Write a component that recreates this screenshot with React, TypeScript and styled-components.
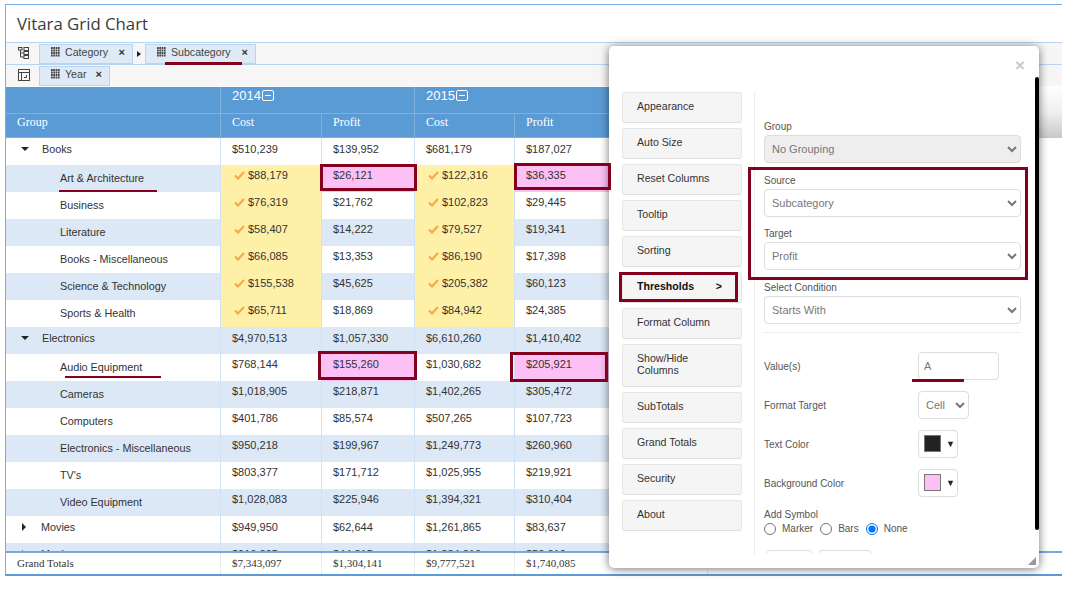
import styled, { createGlobalStyle } from 'styled-components';

const GlobalStyle = createGlobalStyle`
  html, body { margin: 0; padding: 0; background: #fff; }
  body { font-family: "Liberation Sans", Arial, sans-serif; color: #333; overflow: hidden; }
  * { box-sizing: border-box; }
`;

const MAROON = '#85001f';
const COLUMNS = '214px 101px 93px 100px 193px';

interface Frame {
  left: number;
  top: number;
  width: number;
  height: number;
}

interface RowData {
  name: string;
  level: 0 | 1;
  open?: boolean;
  values: string[];
  marked?: boolean;
  frames?: Frame[];
  underline?: { left: number; width: number; bottom: number };
}

const rows: RowData[] = [
  { name: 'Books', level: 0, open: true, values: ['$510,239', '$139,952', '$681,179', '$187,027'] },
  {
    name: 'Art & Architecture',
    level: 1,
    marked: true,
    underline: { left: 53, width: 98, bottom: 0 },
    frames: [
      { left: -2, top: -1, width: 97, height: 27 },
      { left: -1, top: -2, width: 97, height: 27 },
    ],
    values: ['$88,179', '$26,121', '$122,316', '$36,335'],
  },
  { name: 'Business', level: 1, marked: true, values: ['$76,319', '$21,762', '$102,823', '$29,445'] },
  { name: 'Literature', level: 1, marked: true, values: ['$58,407', '$14,222', '$79,527', '$19,341'] },
  { name: 'Books - Miscellaneous', level: 1, marked: true, values: ['$66,085', '$13,353', '$86,190', '$17,398'] },
  { name: 'Science & Technology', level: 1, marked: true, values: ['$155,538', '$45,625', '$205,382', '$60,123'] },
  { name: 'Sports & Health', level: 1, marked: true, values: ['$65,711', '$18,869', '$84,942', '$24,385'] },
  { name: 'Electronics', level: 0, open: true, values: ['$4,970,513', '$1,057,330', '$6,610,260', '$1,410,402'] },
  {
    name: 'Audio Equipment',
    level: 1,
    underline: { left: 59, width: 96, bottom: 3 },
    frames: [
      { left: -4, top: -3, width: 99, height: 29 },
      { left: -5, top: -2, width: 98, height: 30 },
    ],
    values: ['$768,144', '$155,260', '$1,030,682', '$205,921'],
  },
  { name: 'Cameras', level: 1, values: ['$1,018,905', '$218,871', '$1,402,265', '$305,472'] },
  { name: 'Computers', level: 1, values: ['$401,786', '$85,574', '$507,265', '$107,723'] },
  { name: 'Electronics - Miscellaneous', level: 1, values: ['$950,218', '$199,967', '$1,249,773', '$260,960'] },
  { name: "TV's", level: 1, values: ['$803,377', '$171,712', '$1,025,955', '$219,921'] },
  { name: 'Video Equipment', level: 1, values: ['$1,028,083', '$225,946', '$1,394,321', '$310,404'] },
  { name: 'Movies', level: 0, values: ['$949,950', '$62,644', '$1,261,865', '$83,637'] },
  { name: 'Music', level: 0, values: ['$916,895', '$44,815', '$1,284,316', '$58,810'] },
];

const menu = ['Appearance', 'Auto Size', 'Reset Columns', 'Tooltip', 'Sorting', 'Thresholds', 'Format Column', 'Show/Hide Columns', 'SubTotals', 'Grand Totals', 'Security', 'About'];

function GridDots() {
  return (
    <svg width="9" height="10" viewBox="0 0 9 10" fill="#444">
      {[0, 2.3, 4.6, 6.9].flatMap((x) =>
        [0, 2.5, 5, 7.5].map((y) => <rect key={`${x}-${y}`} x={x} y={y} width="1.7" height="2" />),
      )}
    </svg>
  );
}

function Check() {
  return (
    <svg width="11" height="9" viewBox="0 0 11 9" fill="none" stroke="#f6a94a" strokeWidth="2.2">
      <path d="M1 4.5 L4 7.5 L10 1" />
    </svg>
  );
}

function TreeIcon() {
  return (
    <svg width="11" height="12" viewBox="0 0 11 12" fill="none" stroke="#444" strokeWidth="1">
      <rect x="0.5" y="0.5" width="3.5" height="2.5" />
      <rect x="6" y="0.5" width="4.5" height="3" />
      <rect x="6" y="4.5" width="4.5" height="3" />
      <rect x="6" y="8.5" width="4.5" height="3" />
      <path d="M2.5 3 V10 H6 M2.5 6 H6" />
    </svg>
  );
}

function PivotIcon() {
  return (
    <svg width="12" height="12" viewBox="0 0 12 12" fill="none" stroke="#444" strokeWidth="1">
      <rect x="0.5" y="0.5" width="11" height="11" />
      <path d="M0.5 3.5 H11.5 M3.5 3.5 V11.5 M6 8.5 H8.5 V6" />
    </svg>
  );
}

const Chart = styled.div`
  display: flex;
  flex-direction: column;
  width: 1057px;
  height: 572px;
  margin: 4px 0 0 5px;
  border: 1px solid #74aee3;
  border-right: none;
  border-bottom: 2px solid #5b9bd5;
`;

const Title = styled.div`
  height: 37px;
  padding: 8px 0 0 11px;
  font-family: "Open Sans", sans-serif;
  font-size: 16.8px;
  line-height: 22px;
  color: #3a3a3a;
`;

const Toolbar = styled.div`
  display: flex;
  align-items: center;
  gap: 4px;
  height: 22px;
  border-top: 1px solid #b7d5f0;
  background: #f6f6f6;
`;

const ToolIcon = styled.div`
  display: flex;
  align-items: center;
  justify-content: center;
  width: 29px;
  height: 100%;
  margin-top: -2px;
  padding-left: 6px;
`;

const Chip = styled.div<{ $width: number }>`
  position: relative;
  display: flex;
  align-items: center;
  width: ${(p) => p.$width}px;
  height: 20px;
  padding: 0 7px 3px 11px;
  border: 1px solid #b7d5f0;
  background: #deeaf6;
  font-size: 10.6px;
  color: #444;
`;

const ChipLabel = styled.span`
  flex: 1;
  margin-left: 5px;
`;

const ChipClose = styled.span`
  font-size: 11px;
  font-weight: bold;
  color: #333;
`;

const Chevron = styled.span`
  width: 0;
  height: 0;
  border-left: 4px solid #222;
  border-top: 3px solid transparent;
  border-bottom: 3px solid transparent;
`;

const Mark = styled.span<{ $left: number; $width: number; $bottom: number }>`
  position: absolute;
  left: ${(p) => p.$left}px;
  bottom: ${(p) => p.$bottom}px;
  width: ${(p) => p.$width}px;
  height: 2.5px;
  background: ${MAROON};
  z-index: 2;
`;

const HeaderTop = styled.div`
  display: flex;
  height: 26px;
  margin-top: 1px;
  background: #5b9bd5;
  color: #fff;
`;

const HeaderSub = styled(HeaderTop)`
  height: 25px;
  margin-top: 0;
  border-top: 1px solid #7fb1e0;
  border-bottom: 1px solid #7fb1e0;
  font-family: "Liberation Serif", serif;
  font-size: 12px;
`;

const HeaderFill = styled.div<{ $from: string; $to: string }>`
  flex: 1;
  margin: -1px 0;
  background: linear-gradient(${(p) => p.$from}, ${(p) => p.$to});
`;

const HeadCell = styled.div<{ $width: number }>`
  display: flex;
  align-items: center;
  gap: 1px;
  width: ${(p) => p.$width}px;
  height: 100%;
  padding: 0 0 6px 11px;
  border-left: 1px solid #7fb1e0;
  &:first-child {
    border-left: none;
  }
`;

const YearCell = styled(HeadCell)`
  font-size: 13px;
  padding-bottom: 9px;
`;

const Collapse = styled.span`
  display: inline-block;
  position: relative;
  width: 12px;
  height: 11px;
  border: 1px solid #fff;
  border-radius: 2px;
  &::after {
    content: '';
    position: absolute;
    left: 2px;
    right: 2px;
    top: 4px;
    height: 1px;
    background: #fff;
  }
`;

const Body = styled.div`
  flex: 1;
  overflow: hidden;
`;

const Row = styled.div<{ $alt: boolean }>`
  display: grid;
  grid-template-columns: ${COLUMNS};
  height: 27px;
  width: 701px;
  background: ${(p) => (p.$alt ? '#dce8f5' : '#fff')};
`;

const GroupCell = styled.div<{ $level: number }>`
  position: relative;
  display: flex;
  align-items: center;
  height: 100%;
  padding: ${(p) => (p.$level ? '0 0 2px 54px' : '0 0 5px 15px')};
  font-size: 10.8px;
  color: #333;
`;

const Caret = styled.span<{ $open?: boolean }>`
  width: 0;
  height: 0;
  margin-right: ${(p) => (p.$open ? '13px' : '15px')};
  ${(p) =>
    p.$open
      ? `border-top: 4px solid #222; border-left: 4px solid transparent; border-right: 4px solid transparent;`
      : `border-left: 4px solid #222; border-top: 4px solid transparent; border-bottom: 4px solid transparent; margin-left: 1px;`}
`;

const Cell = styled.div<{ $tone?: 'yellow' | 'pink'; $level: number }>`
  position: relative;
  display: flex;
  align-items: center;
  gap: 3px;
  padding: 0 0 ${(p) => (p.$level ? '7px' : '5px')} ${(p) => (p.$tone === 'yellow' ? '13px' : '11px')};
  border-left: 1px solid #cfe2f5;
  font-size: 11px;
  color: #333;
  background: ${(p) => (p.$tone === 'yellow' ? '#fff0a8' : p.$tone === 'pink' ? '#fcc0f5' : 'transparent')};
`;

// sits above the modal: the annotation box of the last column overlaps its edge
const CellBox = styled.span<Frame>`
  position: absolute;
  left: ${(p) => p.left}px;
  top: ${(p) => p.top}px;
  width: ${(p) => p.width}px;
  height: ${(p) => p.height}px;
  border: 3px solid ${MAROON};
  z-index: 6;
`;

const Footer = styled.div`
  display: grid;
  grid-template-columns: ${COLUMNS} 94px;
  height: 23px;
  border-top: 2px solid #7ba7d7;
  font-family: "Liberation Serif", serif;
  font-size: 11px;
  color: #333;
`;

const FootCell = styled.div`
  display: flex;
  align-items: center;
  padding: 0 0 2px 11px;
  border-left: 1px dotted #c3d9ef;
  &:first-child {
    border-left: none;
  }
`;

const Modal = styled.div`
  position: absolute;
  left: 609px;
  top: 46px;
  width: 430px;
  height: 522px;
  padding: 46px 0 13px 13px;
  display: flex;
  background: #fff;
  border-radius: 5px;
  box-shadow: 0 1px 10px rgba(0, 0, 0, 0.55);
  overflow: hidden;
  z-index: 5;
`;

const CloseX = styled.span`
  position: absolute;
  right: 14px;
  top: 11px;
  font-size: 17px;
  font-weight: bold;
  line-height: 18px;
  color: #c9c9c9;
`;

const ScrollBar = styled.div`
  position: absolute;
  right: 0;
  top: 31px;
  width: 4px;
  height: 453px;
  background: #000;
  border-radius: 2px;
`;

const ResizeGrip = styled.svg`
  position: absolute;
  right: 3px;
  bottom: 3px;
`;

const Menu = styled.div`
  display: flex;
  flex-direction: column;
  gap: 5px;
  width: 120px;
`;

const MenuButton = styled.div<{ $active?: boolean; $tall?: boolean }>`
  position: relative;
  display: flex;
  align-items: center;
  justify-content: space-between;
  height: ${(p) => (p.$tall ? '43px' : '31px')};
  padding: 0 19px 4px 14px;
  border: 1px solid #e6e6e6;
  border-bottom-color: #ddd;
  border-radius: 3px;
  background: #f5f5f5;
  font-size: 10.6px;
  line-height: 12px;
  font-weight: ${(p) => (p.$active ? 'bold' : 'normal')};
  color: ${(p) => (p.$active ? '#111' : '#333')};
`;

const MenuBox = styled.span`
  position: absolute;
  left: -4px;
  right: 3px;
  top: -1px;
  bottom: 0;
  border: 3px solid ${MAROON};
`;

const Panel = styled.div`
  position: relative;
  width: 278px;
  height: 463px;
  margin-left: 12px;
  padding: 27px 0 0 9px;
  border-left: 1px solid #ececec;
`;

const Label = styled.div`
  height: 16px;
  padding-top: 1px;
  font-size: 10px;
  line-height: 14px;
  color: #555;
`;

const Select = styled.select<{ $width?: number }>`
  display: block;
  width: ${(p) => p.$width ?? 257}px;
  height: 28px;
  padding: 0 3px;
  border: 1px solid #ddd;
  border-radius: 4px;
  background-color: ${(p) => (p.disabled ? '#eee' : '#fff')};
  font-family: "Liberation Sans", sans-serif;
  font-size: 11px;
  color: #777;
  opacity: 1;
`;

const Field = styled.div`
  height: 53.7px;
`;

const SourceBox = styled.div`
  position: absolute;
  left: -7px;
  top: 75px;
  width: 280px;
  height: 113px;
  border: 3px solid ${MAROON};
  pointer-events: none;
`;

const Divider = styled.div`
  width: 257px;
  height: 1px;
  margin: -2px 0 19px;
  background: #eee;
`;

const FormRow = styled.div`
  display: flex;
  align-items: center;
  height: 28px;
  margin-bottom: 11px;
  &:first-of-type {
    margin-bottom: 12px;
  }
`;

const RowLabel = styled.div`
  width: 154px;
  padding-top: 2px;
  font-size: 10px;
  color: #555;
`;

const ValueInput = styled.div`
  position: relative;
  display: flex;
  align-items: center;
  width: 81px;
  height: 28px;
  padding-left: 5px;
  border: 1px solid #ddd;
  border-radius: 4px;
  font-size: 11px;
  color: #777;
`;

const ColorButton = styled.div`
  display: flex;
  align-items: center;
  gap: 5px;
  width: 40px;
  height: 28px;
  padding-left: 5px;
  border: 1px solid #ddd;
  border-radius: 4px;
  font-size: 9px;
  color: #222;
`;

const Swatch = styled.span<{ $color: string }>`
  width: 17px;
  height: 17px;
  border: 1px solid #777;
  background: ${(p) => p.$color};
`;

const SymbolLabel = styled(Label)`
  margin-top: -1px;
`;

const RadioRow = styled.div`
  display: flex;
  align-items: center;
  font-size: 10px;
  color: #555;
  input {
    width: 12px;
    height: 12px;
    margin: 0 6px 0 0;
  }
  label {
    display: flex;
    align-items: center;
    margin-right: 7px;
  }
`;

const Actions = styled.div`
  display: flex;
  gap: 5px;
  height: 3px;
  margin: 15px 0 0 2px;
  overflow: hidden;
`;

const ActionButton = styled.div<{ $width: number }>`
  width: ${(p) => p.$width}px;
  height: 28px;
  border: 1px solid #ddd;
  border-radius: 4px;
`;

export default function App() {
  return (
    <>
      <GlobalStyle />
      <Chart>
        <Title>Vitara Grid Chart</Title>
        <Toolbar>
          <ToolIcon>
            <TreeIcon />
          </ToolIcon>
          <Chip $width={94}>
            <GridDots />
            <ChipLabel>Category</ChipLabel>
            <ChipClose>×</ChipClose>
          </Chip>
          <Chevron />
          <Chip $width={111}>
            <GridDots />
            <ChipLabel>Subcategory</ChipLabel>
            <ChipClose>×</ChipClose>
            <Mark $left={19} $width={77} $bottom={-2} />
          </Chip>
        </Toolbar>
        <Toolbar>
          <ToolIcon>
            <PivotIcon />
          </ToolIcon>
          <Chip $width={71}>
            <GridDots />
            <ChipLabel>Year</ChipLabel>
            <ChipClose>×</ChipClose>
          </Chip>
        </Toolbar>
        <HeaderTop>
          <YearCell $width={214} />
          <YearCell $width={194}>
            2014
            <Collapse />
          </YearCell>
          <YearCell $width={293}>
            2015
            <Collapse />
          </YearCell>
          <HeaderFill $from="#ffffff" $to="#eeeeee" />
        </HeaderTop>
        <HeaderSub>
          <HeadCell $width={214}>Group</HeadCell>
          <HeadCell $width={101}>Cost</HeadCell>
          <HeadCell $width={93}>Profit</HeadCell>
          <HeadCell $width={100}>Cost</HeadCell>
          <HeadCell $width={193}>Profit</HeadCell>
          <HeaderFill $from="#eeeeee" $to="#c8c8c8" />
        </HeaderSub>
        <Body>
          {rows.map((row, i) => (
            <Row key={row.name} $alt={i % 2 === 1}>
              <GroupCell $level={row.level}>
                {row.level === 0 && <Caret $open={row.open} />}
                {row.name}
                {row.underline && <Mark $left={row.underline.left} $width={row.underline.width} $bottom={row.underline.bottom} />}
              </GroupCell>
              {row.values.map((value, c) => {
                const isCost = c % 2 === 0;
                const yellow = row.marked && isCost;
                const frame = !isCost ? row.frames?.[(c - 1) / 2] : undefined;
                return (
                  <Cell key={c} $level={row.level} $tone={yellow ? 'yellow' : frame ? 'pink' : undefined}>
                    {yellow && <Check />}
                    {value}
                    {frame && <CellBox {...frame} />}
                  </Cell>
                );
              })}
            </Row>
          ))}
        </Body>
        <Footer>
          <FootCell>Grand Totals</FootCell>
          <FootCell>$7,343,097</FootCell>
          <FootCell>$1,304,141</FootCell>
          <FootCell>$9,777,521</FootCell>
          <FootCell>$1,740,085</FootCell>
          <FootCell />
        </Footer>
      </Chart>

      <Modal>
        <CloseX>×</CloseX>
        <ScrollBar />
        <ResizeGrip width="8" height="8" viewBox="0 0 8 8" fill="#999">
          <path d="M8 0 V8 H0 Z" />
        </ResizeGrip>
        <Menu>
          {menu.map((item) => (
            <MenuButton key={item} $active={item === 'Thresholds'} $tall={item === 'Show/Hide Columns'}>
              {item}
              {item === 'Thresholds' && (
                <>
                  <span>&gt;</span>
                  <MenuBox />
                </>
              )}
            </MenuButton>
          ))}
        </Menu>
        <Panel>
          <Field>
            <Label>Group</Label>
            <Select disabled defaultValue="none">
              <option value="none">No Grouping</option>
            </Select>
          </Field>
          <Field>
            <Label>Source</Label>
            <Select defaultValue="subcategory">
              <option value="subcategory">Subcategory</option>
            </Select>
          </Field>
          <Field>
            <Label>Target</Label>
            <Select defaultValue="profit">
              <option value="profit">Profit</option>
            </Select>
          </Field>
          <Field>
            <Label>Select Condition</Label>
            <Select defaultValue="starts">
              <option value="starts">Starts With</option>
            </Select>
          </Field>
          <SourceBox />
          <Divider />
          <FormRow>
            <RowLabel>Value(s)</RowLabel>
            <ValueInput>
              A
              <Mark $left={-7} $width={52} $bottom={-3} />
            </ValueInput>
          </FormRow>
          <FormRow>
            <RowLabel>Format Target</RowLabel>
            <Select $width={51} defaultValue="cell">
              <option value="cell">Cell</option>
            </Select>
          </FormRow>
          <FormRow>
            <RowLabel>Text Color</RowLabel>
            <ColorButton>
              <Swatch $color="#222" />▼
            </ColorButton>
          </FormRow>
          <FormRow>
            <RowLabel>Background Color</RowLabel>
            <ColorButton>
              <Swatch $color="#fcc0f5" />▼
            </ColorButton>
          </FormRow>
          <SymbolLabel>Add Symbol</SymbolLabel>
          <RadioRow>
            <label>
              <input type="radio" name="symbol" readOnly />
              Marker
            </label>
            <label>
              <input type="radio" name="symbol" readOnly />
              Bars
            </label>
            <label>
              <input type="radio" name="symbol" defaultChecked />
              None
            </label>
          </RadioRow>
          <Actions>
            <ActionButton $width={47} />
            <ActionButton $width={54} />
          </Actions>
        </Panel>
      </Modal>
    </>
  );
}
